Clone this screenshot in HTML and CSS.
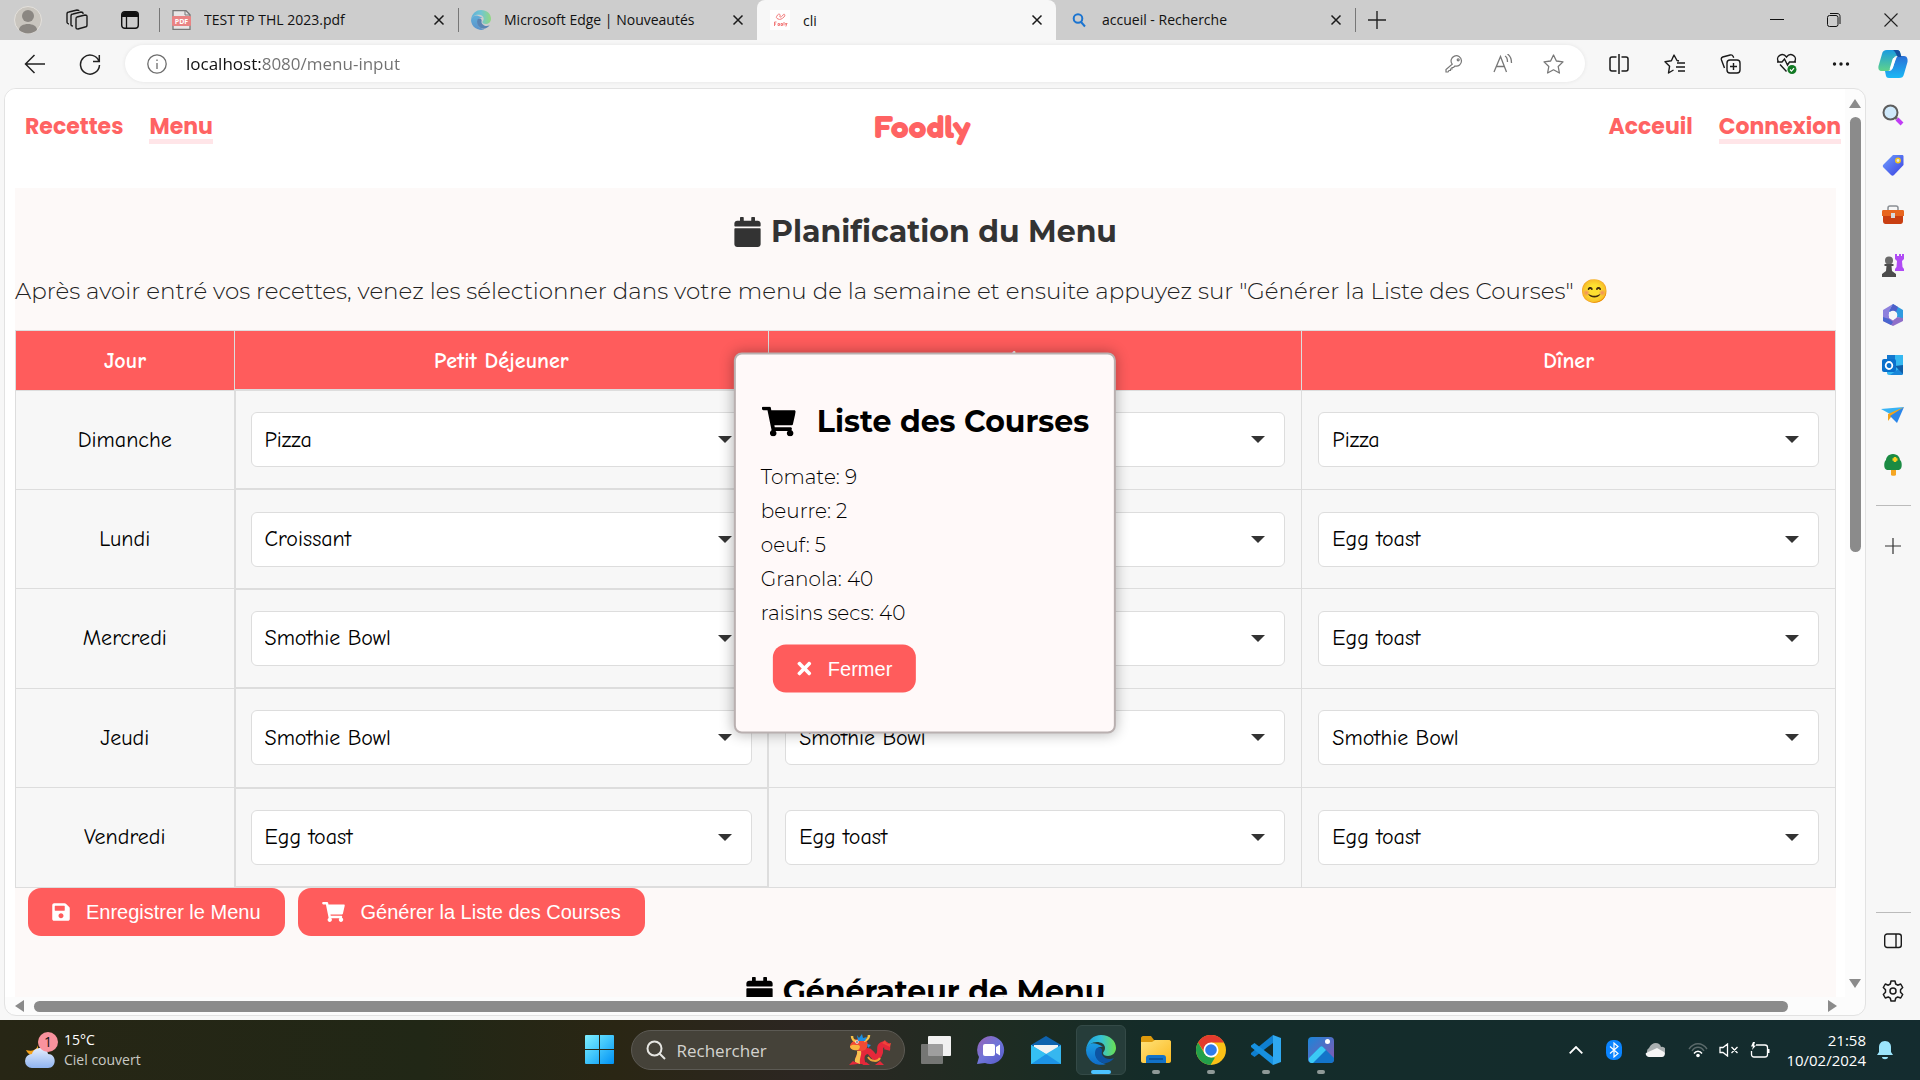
FILE: index.html
```html
<!DOCTYPE html>
<html lang="fr">
<head>
<meta charset="utf-8">
<title>cli</title>
<link rel="stylesheet" href="styles.css">
</head>
<body>
<svg class="defs" aria-hidden="true">
  <defs>
    <linearGradient id="gWin" x1="0" y1="0" x2="1" y2="1"><stop offset="0" stop-color="#7ff0ff"/><stop offset=".5" stop-color="#3fc4fb"/><stop offset="1" stop-color="#0091f5"/></linearGradient>
    <linearGradient id="gEdgeTop" x1="0" y1="0" x2="1" y2="0"><stop offset="0" stop-color="#1a9fe0"/><stop offset=".5" stop-color="#35c1d6"/><stop offset="1" stop-color="#6be04f"/></linearGradient>
    <linearGradient id="gEdgeLow" x1="0" y1="0" x2="0" y2="1"><stop offset="0" stop-color="#1b9de2"/><stop offset="1" stop-color="#0f6cc9"/></linearGradient>
    <linearGradient id="gCop1" x1="0" y1="0" x2="0" y2="1"><stop offset="0" stop-color="#1a9be0"/><stop offset="1" stop-color="#5fd38a"/></linearGradient>
    <linearGradient id="gCop2" x1="0" y1="0" x2="0" y2="1"><stop offset="0" stop-color="#2a6fd6"/><stop offset="1" stop-color="#1ab8f5"/></linearGradient>
    <linearGradient id="gTag" x1="0" y1="0" x2="1" y2="1"><stop offset="0" stop-color="#6fa0ff"/><stop offset="1" stop-color="#3a3fe0"/></linearGradient>
    <linearGradient id="gChat" x1="0" y1="0" x2="1" y2="1"><stop offset="0" stop-color="#9a62b5"/><stop offset=".5" stop-color="#6f75d8"/><stop offset="1" stop-color="#5558c8"/></linearGradient>
    <linearGradient id="gFold" x1="0" y1="0" x2="1" y2="1"><stop offset="0" stop-color="#ffe27a"/><stop offset="1" stop-color="#fbb91f"/></linearGradient>
    <linearGradient id="gPhoto" x1="0" y1="0" x2="1" y2="1"><stop offset="0" stop-color="#1a86d9"/><stop offset="1" stop-color="#8a55b0"/></linearGradient>
    <linearGradient id="gCloud" x1="0" y1="0" x2="0" y2="1"><stop offset="0" stop-color="#e4edfd"/><stop offset="1" stop-color="#8fb4f0"/></linearGradient>
    <symbol id="edge" viewBox="0 0 30 30">
      <path fill="url(#gEdgeLow)" d="M0 15C1 9 6 7 11 9c3 1 5 2 6 3-6-1-8 4-7 9 1 4 5 7 10 8A15 15 0 0 1 0 15Z"/>
      <path fill="url(#gEdgeTop)" d="M0 15C1 5 8 0 15 0c9 0 15 6 15 13 0 5-4 8-8 8-3 0-5-1-5-3 0-1 2-2 2-5 0-4-4-6-8-6C6 7 1 10 0 15Z"/>
      <path fill="#0d54a3" d="M10 14c-2 4-1 9 3 12 5 4 11 2 15-3-4 2-9 1-11-2-2-2-1-4-1-6-1-3-4-3-6-1Z"/>
    </symbol>
    <symbol id="x" viewBox="0 0 12 12"><path d="M1.500 1.500l9 9M10.500 1.500l-9 9" fill="none" stroke="#1a1a1a" stroke-width="1.500"/></symbol>
    <symbol id="calendar" viewBox="0 0 448 512"><path fill="currentColor" d="M12 192h424c6.600 0 12 5.400 12 12v260c0 26.500-21.500 48-48 48H48c-26.500 0-48-21.500-48-48V204c0-6.600 5.400-12 12-12zm436-44v-36c0-26.500-21.500-48-48-48h-48V12c0-6.600-5.400-12-12-12h-40c-6.600 0-12 5.400-12 12v52H160V12c0-6.600-5.400-12-12-12h-40c-6.600 0-12 5.400-12 12v52H48C21.500 64 0 85.500 0 112v36c0 6.600 5.400 12 12 12h424c6.600 0 12-5.400 12-12z"/></symbol>
    <symbol id="cart" viewBox="0 0 576 512"><path fill="currentColor" d="M528.120 301.319l47.273-208C578.806 78.301 567.391 64 551.990 64H159.208l-9.166-44.810C147.758 8.021 137.930 0 126.529 0H24C10.745 0 0 10.745 0 24v16c0 13.255 10.745 24 24 24h69.883l70.248 343.435C147.325 417.100 136 435.222 136 456c0 30.928 25.072 56 56 56s56-25.072 56-56c0-15.674-6.447-29.835-16.824-40h209.647C430.447 426.165 424 440.326 424 456c0 30.928 25.072 56 56 56s56-25.072 56-56c0-22.172-12.888-41.332-31.579-50.405l5.517-24.276c3.413-15.018-8.002-29.319-23.403-29.319H218.117l-6.545-32h293.145c11.206 0 20.920-7.754 23.403-18.681z"/></symbol>
    <symbol id="save" viewBox="0 0 448 512"><path fill="currentColor" d="M433.941 129.941l-83.882-83.882A48 48 0 0 0 316.118 32H48C21.490 32 0 53.490 0 80v352c0 26.510 21.490 48 48 48h352c26.510 0 48-21.490 48-48V163.882a48 48 0 0 0-14.059-33.941zM224 416c-35.346 0-64-28.654-64-64 0-35.346 28.654-64 64-64s64 28.654 64 64c0 35.346-28.654 64-64 64zm96-304.520V212c0 6.627-5.373 12-12 12H76c-6.627 0-12-5.373-12-12V108c0-6.627 5.373-12 12-12h228.520c3.183 0 6.235 1.264 8.485 3.515l3.480 3.480A11.996 11.996 0 0 1 320 111.480z"/></symbol>
    <symbol id="times" viewBox="0 0 352 512"><path fill="currentColor" d="M242.720 256l100.070-100.070c12.280-12.280 12.280-32.190 0-44.480l-22.240-22.240c-12.280-12.280-32.190-12.280-44.480 0L176 189.280 75.930 89.210c-12.280-12.280-32.190-12.280-44.480 0L9.210 111.450c-12.280 12.280-12.280 32.190 0 44.480L109.280 256 9.210 356.070c-12.280 12.280-12.280 32.190 0 44.480l22.240 22.240c12.280 12.280 32.200 12.280 44.480 0L176 322.720l100.070 100.070c12.280 12.280 32.200 12.280 44.480 0l22.240-22.240c12.280-12.280 12.280-32.190 0-44.480L242.720 256z"/></symbol>
  </defs>
</svg>

<header class="tabbar">
  <div class="tab-tools">
    <button aria-label="Profil"><svg width="28" height="28" viewBox="0 0 28 28"><circle cx="14" cy="14" r="13.500" fill="#c9c5be" stroke="#e4e1dc"/><circle cx="14" cy="10" r="6" fill="#8b8782"/><path d="M5 24c0-8 18-8 18 0-5 4.500-13 4.500-18 0Z" fill="#8b8782"/></svg></button>
    <button aria-label="Espaces de travail"><svg width="22" height="22" viewBox="0 0 22 22" fill="none" stroke="#1a1a1a" stroke-width="1.400"><path d="M11 8l8-2c1 0 2 0 2 1v9c0 1-1 2-2 2l-7 2c-1 0-2 0-2-1v-9c0-1 0-2 1-2ZM7 17c-1 0-2 0-2-1V7c0-1 1-2 2-2l8-2c1 0 2 0 2 1v1M3 15c-1 0-2-1-2-2V5c0-1 1-2 2-2l8-2c1 0 2 0 2 1"/></svg></button>
    <button aria-label="Onglets"><svg width="18" height="18" viewBox="0 0 18 18"><rect x=".7" y=".7" width="16.600" height="16.600" rx="3" fill="none" stroke="#111" stroke-width="1.400"/><path d="M1 4c0-2 1-3 3-3h10c2 0 3 1 3 3v2H1Z" fill="#111"/><path d="M5.500 6v11" stroke="#111" stroke-width="1.300"/></svg></button>
  </div>
  <nav class="tabs" aria-label="Onglets ouverts">
    <div class="tab">
      <svg width="19" height="20" viewBox="0 0 19 20"><path d="M1 .7h13l4 4v14.600H1Z" fill="#e8e6e6" stroke="#777" stroke-width="1.300"/><path d="M13 1v4h5" fill="none" stroke="#777"/><rect y="6" width="19" height="10" rx="1" fill="#e98383"/><text x="9.500" y="14" text-anchor="middle" class="pdf">PDF</text></svg>
      <span class="tab-title">TEST TP THL 2023.pdf</span><button aria-label="Fermer l'onglet"><svg width="12" height="12"><use href="#x"/></svg></button>
    </div>
    <div class="tab">
      <svg class="faded" width="20" height="20"><use href="#edge"/></svg>
      <span class="tab-title">Microsoft Edge | Nouveautés</span><button aria-label="Fermer l'onglet"><svg width="12" height="12"><use href="#x"/></svg></button>
    </div>
    <div class="tab active">
      <svg width="20" height="20" viewBox="0 0 20 20"><path d="M0 0h20v20H0Z" fill="#fff"/><path d="M7 6c1-3 4-2 3 0s2 1 3-1 3 0 1 2-4 3-6 2-2-2-1-3M4.500 16v-4h2M4.500 14h1.500M8 13.500h1.500v2H8ZM11 13.500h1.500v2H11ZM14 12v3.500M15.500 13l.7 2 .7-2-1 3.500" fill="none" stroke="#f27c7c"/></svg>
      <span class="tab-title">cli</span><button aria-label="Fermer l'onglet"><svg width="12" height="12"><use href="#x"/></svg></button>
    </div>
    <div class="tab">
      <svg width="20" height="20" viewBox="0 0 20 20" fill="none" stroke="#1b74d0" stroke-width="2"><circle cx="9" cy="8.500" r="4.300"/><path d="M12 12l4 4.500"/></svg>
      <span class="tab-title">accueil - Recherche</span><button aria-label="Fermer l'onglet"><svg width="12" height="12"><use href="#x"/></svg></button>
    </div>
  </nav>
  <button class="new-tab" aria-label="Nouvel onglet"><svg width="18" height="18" viewBox="0 0 18 18"><path d="M9 0v18M0 9h18" stroke="#222" stroke-width="1.400"/></svg></button>
  <div class="win-controls">
    <button aria-label="Réduire"><svg width="14" height="14" viewBox="0 0 14 14"><path d="M0 6.500h14" stroke="#111"/></svg></button>
    <button aria-label="Restaurer"><svg width="14" height="14" viewBox="0 0 14 14" fill="none" stroke="#111"><rect x=".5" y="2.500" width="10.500" height="11" rx="2"/><path d="M3 .5h7c2 0 3 1 3 3v7.500"/></svg></button>
    <button aria-label="Fermer"><svg width="14" height="14" viewBox="0 0 14 14"><path d="M.5.5l13 13M13.500.5l-13 13" stroke="#222" stroke-width="1.100"/></svg></button>
  </div>
</header>

<div class="toolbar">
  <div class="nav-tools">
    <button aria-label="Retour"><svg width="22" height="20" viewBox="0 0 22 20" fill="none" stroke="#222" stroke-width="1.500"><path d="M21 10H2M10.500 1L1.500 10l9 9"/></svg></button>
    <button aria-label="Actualiser"><svg width="22" height="22" viewBox="0 0 22 22" fill="none" stroke="#222" stroke-width="1.500"><path d="M20 8.500A9.500 9.500 0 1 0 20.500 12M20.300 2v6.500H14"/></svg></button>
  </div>
  <div class="address">
    <svg width="20" height="20" viewBox="0 0 20 20" fill="none" stroke="#6d6d6d" stroke-width="1.300"><circle cx="10" cy="10" r="9.200"/><path d="M10 9v6M10 5.500v1.600"/></svg>
    <input class="url" type="text" aria-label="Adresse" value="localhost:8080/menu-input">
    <button aria-label="Mots de passe"><svg width="18" height="18" viewBox="0 0 18 18" fill="none" stroke="#777" stroke-width="1.200"><path d="M7.200 9.200A5.200 5.200 0 1 1 10 11l-1.500 1.500H7V14H5.500v1.500H4L3 17H1v-2.500Z"/><circle cx="13.200" cy="4.800" r="1"/></svg></button>
    <button aria-label="Lecture à voix haute"><svg width="20" height="20" viewBox="0 0 20 20" fill="none" stroke="#777" stroke-width="1.300"><path d="M1 18L7.500 2.500 13.500 18M3.500 12.500h8M12 2c2 1 2.500 3 2.500 6M14.500 0c3 2 4 5 4 9"/></svg></button>
    <button aria-label="Ajouter aux favoris"><svg width="21" height="20" viewBox="0 0 21 20" fill="none" stroke="#777" stroke-width="1.300"><path stroke-linejoin="round" d="M10.500 1l2.900 6 6.600.9-4.800 4.600 1.200 6.500-5.900-3.200L4.600 19l1.200-6.500L1 7.900 7.600 7Z"/></svg></button>
  </div>
  <div class="ext-tools">
    <button aria-label="Fractionner l'écran"><svg width="20" height="20" viewBox="0 0 20 20" fill="none" stroke="#1a1a1a" stroke-width="1.500"><path d="M7.500 3H3C1.500 3 1 3.700 1 5v10c0 1.300.5 2 2 2h4.500M10 0v20M12.500 3H17c1.500 0 2 .7 2 2v10c0 1.300-.5 2-2 2h-4.500"/></svg></button>
    <button aria-label="Favoris"><svg width="21" height="20" viewBox="0 0 21 20" fill="none" stroke="#1a1a1a" stroke-width="1.400"><path stroke-linejoin="round" d="M15 7l-2-.5L10 1 7.400 6.800 1 7.700l4.600 4.500L4.500 19l5-3M13 9h8M12 13h9M14 17h7"/></svg></button>
    <button aria-label="Collections"><svg width="21" height="20" viewBox="0 0 21 20" fill="none" stroke="#1a1a1a" stroke-width="1.400"><rect x="7" y="6" width="13" height="13" rx="3"/><path d="M13.500 9v7M10 12.500h7M4.500 14L1.500 6c-.5-1.500 0-2.500 1.200-3l7.500-2c1.500-.4 2.300 0 3 1.500l.5 1.300"/></svg></button>
    <button aria-label="Performances"><svg width="21" height="21" viewBox="0 0 21 21" fill="none" stroke="#1a1a1a" stroke-width="1.400"><path d="M2.300 8.500c-3-5 4.200-10 8.200-4.500 4-5.500 11.200-.5 8.200 4.500M1 9h5l2.500-3 3 6 2-3H20M4 11.500l6.500 7"/><circle cx="16" cy="16.500" r="4.500" fill="#137a25" stroke="none"/><path d="M14 16.500l1.500 1.700 2.500-3" stroke="#fff" stroke-width="1.200"/></svg></button>
    <button aria-label="Plus"><svg width="18" height="6" viewBox="0 0 18 6" fill="#1a1a1a"><circle cx="2.500" cy="3" r="1.700"/><circle cx="9" cy="3" r="1.700"/><circle cx="15.500" cy="3" r="1.700"/></svg></button>
  </div>
  <button class="copilot" aria-label="Copilot"><svg width="30" height="28" viewBox="0 0 30 28"><path fill="url(#gCop1)" d="M9 0h10c2 0 2.500 1 3 2l1 4h-4c-2 0-3 1-3.600 3L12 19c-.6 2-1.500 2-3 2H4c-3 0-4-2-3.500-5L4 4c.8-3 2-4 5-4Z"/><path fill="url(#gCop2)" d="M21 28H11c-2 0-2.500-1-3-2l-1-5h4c2 0 3-1 3.600-3L18 9c.6-2 1.500-3 3-3h5c3 0 4 3 3.500 6L26 24c-.8 3-2 4-5 4Z"/><path fill="#16509e" d="M15 0h4c2 0 2.500 1 3 2l1.500 5H20c-2-2-2-5-5-7Z"/><path fill="#fff" d="M14.300 10c.4-1.700 1-2 2-2h1.400l-2.400 8.500c-.5 2-1 2.500-2 2.500h-1.600Z"/></svg></button>
</div>

<div class="workspace">
  <div class="frame">
    <main class="page">
      <header class="site-nav">
        <div class="links"><a href="#recettes">Recettes</a><a class="on" href="#menu">Menu</a></div>
        <a class="brand" href="#accueil">Foodly</a>
        <div class="links end"><a href="#acceuil">Acceuil</a><a class="on" href="#connexion">Connexion</a></div>
      </header>
      <section class="planner">
        <h1><svg class="ic-cal"><use href="#calendar"/></svg>Planification du Menu</h1>
        <p class="intro">Après avoir entré vos recettes, venez les sélectionner dans votre menu de la semaine et ensuite appuyez sur "Générer la Liste des Courses" 😊</p>
        <table>
          <thead><tr><th class="day">Jour</th><th>Petit Déjeuner</th><th>Déjeuner</th><th>Dîner</th></tr></thead>
          <tbody>
            <tr><td>Dimanche</td>
              <td><span class="pick"><select aria-label="Dimanche, petit déjeuner"><option>Pizza</option></select></span></td>
              <td><span class="pick"><select aria-label="Dimanche, déjeuner"><option>Pizza</option></select></span></td>
              <td><span class="pick"><select aria-label="Dimanche, dîner"><option>Pizza</option></select></span></td></tr>
            <tr><td>Lundi</td>
              <td><span class="pick"><select aria-label="Lundi, petit déjeuner"><option>Croissant</option></select></span></td>
              <td><span class="pick"><select aria-label="Lundi, déjeuner"><option>Pizza</option></select></span></td>
              <td><span class="pick"><select aria-label="Lundi, dîner"><option>Egg toast</option></select></span></td></tr>
            <tr><td>Mercredi</td>
              <td><span class="pick"><select aria-label="Mercredi, petit déjeuner"><option>Smothie Bowl</option></select></span></td>
              <td><span class="pick"><select aria-label="Mercredi, déjeuner"><option>Pizza</option></select></span></td>
              <td><span class="pick"><select aria-label="Mercredi, dîner"><option>Egg toast</option></select></span></td></tr>
            <tr><td>Jeudi</td>
              <td><span class="pick"><select aria-label="Jeudi, petit déjeuner"><option>Smothie Bowl</option></select></span></td>
              <td><span class="pick"><select aria-label="Jeudi, déjeuner"><option>Smothie Bowl</option></select></span></td>
              <td><span class="pick"><select aria-label="Jeudi, dîner"><option>Smothie Bowl</option></select></span></td></tr>
            <tr><td>Vendredi</td>
              <td><span class="pick"><select aria-label="Vendredi, petit déjeuner"><option>Egg toast</option></select></span></td>
              <td><span class="pick"><select aria-label="Vendredi, déjeuner"><option>Egg toast</option></select></span></td>
              <td><span class="pick"><select aria-label="Vendredi, dîner"><option>Egg toast</option></select></span></td></tr>
          </tbody>
        </table>
        <div class="actions">
          <button class="cta"><svg class="ic-save"><use href="#save"/></svg>Enregistrer le Menu</button>
          <button class="cta"><svg class="ic-cart"><use href="#cart"/></svg>Générer la Liste des Courses</button>
        </div>
        <h2><svg class="ic-cal"><use href="#calendar"/></svg>Générateur de Menu</h2>
      </section>
      <div class="modal" role="dialog" aria-labelledby="list-title">
        <h2 id="list-title"><svg class="ic-cart-big"><use href="#cart"/></svg>Liste des Courses</h2>
        <ul><li>Tomate: 9</li><li>beurre: 2</li><li>oeuf: 5</li><li>Granola: 40</li><li>raisins secs: 40</li></ul>
        <button class="cta"><svg class="ic-times"><use href="#times"/></svg>Fermer</button>
      </div>
    </main>
    <div class="vbar"><i class="arrow up"></i><div class="vtrack"><div class="vthumb"></div></div><i class="arrow down"></i></div>
    <div class="hbar"><i class="arrow left"></i><div class="hthumb"></div><i class="arrow right"></i></div>
  </div>
  <aside class="sidebar">
    <button aria-label="Rechercher"><svg width="22" height="22" viewBox="0 0 22 22"><path d="M13 13l2 2" stroke="#777" stroke-width="3"/><path d="M15 15l5 5" stroke="#c03cf5" stroke-width="4"/><circle cx="8.500" cy="8.500" r="7" fill="#cfe9fb" stroke="#5d5d5d" stroke-width="2"/></svg></button>
    <button aria-label="Achats"><svg width="22" height="22" viewBox="0 0 22 22"><path d="M11 1h9c1 0 1.500.5 1.500 1.500V11L12 21c-1 1-2 1-3 0l-7.500-7.500c-1-1-1-2 0-3Z" fill="url(#gTag)"/><circle cx="16" cy="6.500" r="2.200" fill="#dfe6f2" stroke="#f5c518" stroke-width="1.500"/></svg></button>
    <button aria-label="Outils"><svg width="24" height="20" viewBox="0 0 24 20"><path d="M7 5V3c0-1.500 1-2 2-2h6c1 0 2 .5 2 2v2" fill="none" stroke="#8b8f94" stroke-width="1.500"/><path d="M2 10h20v6c0 2-1 3-2.500 3h-15C3 19 2 18 2 16Z" fill="#c93f12"/><path d="M1 6.500C1 5.500 1.500 5 2.500 5h19c1 0 1.500.5 1.500 1.500V11H1Z" fill="#e8661f"/><path d="M10 8h4v5h-4Z" fill="#d6dadd"/></svg></button>
    <button aria-label="Jeux"><svg width="24" height="24" viewBox="0 0 24 24"><path d="M14 1h2v2h2V1h2v2h1V1h2v5l-2 2 .5 6 1.500 2v2h-9v-2l1.500-2 .5-6-2-2Z" fill="#b04bf5"/><circle cx="8" cy="7.500" r="4" fill="#6a6a6a"/><path d="M3.500 11h9v2h-2l.5 5 4 3v3H1v-3l4-3 .5-5h-2Z" fill="#4c4c4c"/></svg></button>
    <button aria-label="Microsoft 365"><svg width="22" height="24" viewBox="0 0 22 24"><path d="M11 1L7 8.500V16l-6 2V7Z" fill="#8d80dd"/><path d="M11 1l10 6v9l-6-2V10L7 8.500Z" fill="#2f9be0"/><path d="M11 1l5 3-2 5-7-.5Z" fill="#4f5fc9"/><path d="M21 15v3l-10 5-10-5v-2l6-1 4 2.500 4-3.500Z" fill="#8f6fc9"/><path d="M1 14l6 2 4 3-2 3-8-4Z" fill="#4a66cf"/><circle cx="11" cy="12" r="4.300" fill="#f7f7f7"/></svg></button>
    <button aria-label="Outlook"><svg width="22" height="22" viewBox="0 0 22 22"><path d="M5 1h16v18c0 1-.5 2-1.500 2H7c-1 0-2-1-2-2Z" fill="#35b8f1"/><path d="M5 1h8v8H5Z" fill="#1378cf"/><path d="M21 10v9c0 1-.5 2-1.500 2H8l13-9Z" fill="#1a86d9"/><path d="M13 12l8 8V11Z" fill="#0f5ea8"/><rect y="5" width="14" height="13" rx="2" fill="#0a70cc"/><ellipse cx="7" cy="11.500" rx="3.300" ry="3.500" fill="none" stroke="#fff" stroke-width="1.800"/></svg></button>
    <button aria-label="Déposer"><svg width="24" height="18" viewBox="0 0 24 18"><path d="M0 3L23 1 11 9Z" fill="#37b3f5"/><path d="M23 1L7 8v7l3-4Z" fill="#f2a31b"/><path d="M23 1L9 10l7 7Z" fill="#2a86ea"/></svg></button>
    <button aria-label="Arbre"><svg width="20" height="24" viewBox="0 0 20 24"><path d="M8 15h5v7c0 1-5 1-5 0Z" fill="#f5a623"/><path d="M10 1c5 0 7 4 7 6 2 1 3 9-1 10H4C0 16 1 8 3 7c0-2 2-6 7-6Z" fill="#1b8b43"/><path d="M12 4v5M9.500 6.500h5" stroke="#ffd21f" stroke-width="2.500"/></svg></button>
    <hr>
    <button aria-label="Personnaliser"><svg width="16" height="16" viewBox="0 0 16 16"><path d="M8 0v16M0 8h16" stroke="#333" stroke-width="1.200"/></svg></button>
    <hr class="push">
    <button aria-label="Masquer la barre latérale"><svg width="18" height="16" viewBox="0 0 18 16" fill="none" stroke="#1a1a1a" stroke-width="1.400"><rect x=".7" y="1" width="16.600" height="13.500" rx="2.500"/><path d="M12 1v13.500"/></svg></button>
    <button aria-label="Paramètres"><svg width="22" height="22" viewBox="0 0 22 22" fill="none" stroke="#1a1a1a" stroke-width="1.500" stroke-linejoin="round"><path d="M9 1h4l.7 3 2 1.200L18.700 4l2 3.500-2.200 2.200v2.600l2.200 2.200-2 3.500-3-1-2 1.200L13 21H9l-.7-2.800-2-1.200-3 1-2-3.500 2.200-2.200V9.700L1.300 7.500l2-3.500 3 1.200 2-1.200Z"/><circle cx="11" cy="11" r="3"/></svg></button>
  </aside>
</div>

<footer class="taskbar">
  <div class="weather">
    <svg width="34" height="38" viewBox="0 0 34 38"><path d="M14 8c2 8-3 14-12 11 2 5 8 7 12 5Z" fill="#f5a31c"/><path d="M8 37a7 7 0 0 1 0-14c2-8 15-8 16 0 9 0 9 14 0 14Z" fill="url(#gCloud)"/><circle cx="24" cy="11" r="10" fill="#f9929d"/><text x="24" y="16" text-anchor="middle" class="badge">1</text></svg>
    <div><div>15°C</div><div class="dim">Ciel couvert</div></div>
  </div>
  <div class="apps">
    <button aria-label="Démarrer"><svg width="30" height="30" viewBox="0 0 30 30" fill="url(#gWin)"><path d="M1 0h13v14H0V1q0-1 1-1ZM15 0h13q1 0 1 1v13H15ZM0 15h14v14H1q-1 0-1-1ZM15 15h14v13q0 1-1 1H15Z"/></svg></button>
    <label class="search">
      <svg width="20" height="20" viewBox="0 0 20 20" fill="none" stroke="#e6e6e2" stroke-width="2"><circle cx="8.500" cy="8.500" r="7"/><path d="M13.500 13.500L19 19"/></svg>
      <input type="text" placeholder="Rechercher" aria-label="Rechercher">
      <svg width="44" height="32" viewBox="0 0 44 32"><path d="M12 25c3-8 8-10 11-6s5 7 8 2-1-8 3-10 6 1 5 5" fill="none" stroke="#e5283a" stroke-width="6"/><path d="M20 23c3 5 10 5 12 1" fill="none" stroke="#f0a53a" stroke-width="2"/><path d="M8 30c-3-5 2-9 1-13l7-1c2 4-1 8 2 14Z" fill="#e5283a"/><path d="M7 28c-1-4 3-6 2-11h4c1 4-2 7-1 13Z" fill="#f7c250"/><path d="M2 12c1-4 6-8 13-7 5 1 6 6 3 10-3 3-7 2-10 1-3 0-6-1-6-4Z" fill="#f04a34"/><path d="M2 12c3-2 5-1 8-1s2 4 0 5-8 0-8-4Z" fill="#f9b53f"/><path d="M4 2c0 3 2 5 4 5M21 1c0 4-2 5-5 6" fill="none" stroke="#f9c246" stroke-width="2.500"/><path d="M9 1l2 3 3-4 1 4 4-1-2 4H10ZM19 10l4 1-3 3Z" fill="#1d8fe0"/><circle cx="9" cy="8" r="1.700" fill="#fff"/><circle cx="9" cy="8" r=".8" fill="#222"/><path d="M1 31l4-4 5 3ZM27 31l5-4 4 4ZM14 31l4-3 4 3Z" fill="#e5283a"/><path d="M34 9l3-3 2 4 4-1-1 4Z" fill="#f0443a"/></svg>
    </label>
    <button aria-label="Vue des tâches"><svg width="30" height="28" viewBox="0 0 30 28"><rect x="7" width="23" height="20" rx="1" fill="#f1f1f1"/><rect y="8" width="22" height="20" rx="1" fill="#8a8a8a" opacity=".8"/></svg></button>
    <button aria-label="Conversation"><svg width="30" height="30" viewBox="0 0 30 30"><path d="M15 1a14 14 0 1 1-6 27l-8 1 2-7A14 14 0 0 1 15 1Z" fill="url(#gChat)"/><rect x="7" y="9" width="12" height="12" rx="2" fill="#fff"/><path d="M20 12l4-2.500v11L20 18Z" fill="#fff"/></svg></button>
    <button aria-label="Courrier"><svg width="30" height="28" viewBox="0 0 30 28"><path d="M0 9L15 0l15 9v19H0Z" fill="#0e62ad"/><path d="M3 9h24v12H3Z" fill="#f1f2f3"/><path d="M0 9l15 9L30 9v19H0Z" fill="#36b7ef"/><path d="M0 28L15 18l15 10Z" fill="#1d94e6"/><path d="M0 9l15 9L0 28Z" fill="#35c0f3"/></svg></button>
    <button class="current" aria-label="Edge"><svg width="30" height="30"><use href="#edge"/></svg></button>
    <button class="open" aria-label="Explorateur"><svg width="30" height="28" viewBox="0 0 30 28"><path d="M0 2C0 1 1 0 2 0h8l3 4h15c1 0 2 1 2 2v6H0Z" fill="#dd9a0c"/><path d="M0 6h11l3-2h14c1 0 2 1 2 2v19c0 1-1 2-2 2H2c-1 0-2-1-2-2Z" fill="url(#gFold)"/><path d="M5 27v-5c0-2 1-3 3-3h14c2 0 3 1 3 3v5Z" fill="#1272c8"/><path d="M8 23h14" stroke="#0a4c91" stroke-width="1.500"/></svg></button>
    <button class="open" aria-label="Chrome"><svg width="30" height="30" viewBox="0 0 30 30"><circle cx="15" cy="15" r="15" fill="#fbc116"/><path d="M2 7.500A15 15 0 0 1 28 7.500H15L9 18Z" fill="#e33b2e"/><path d="M2 7.500L8.500 18.500 15 22.500h4L14.500 30A15 15 0 0 1 2 7.500Z" fill="#23a04a"/><circle cx="15" cy="15" r="7.500" fill="#fff"/><circle cx="15" cy="15" r="5.800" fill="#2f7bea"/></svg></button>
    <button class="open" aria-label="Visual Studio Code"><svg width="30" height="30" viewBox="0 0 30 30"><path d="M22 0l8 3v24l-8 3Z" fill="#2fa8f0"/><path d="M22 0v8L3.500 22 0 19.500v-1.500Z" fill="#0f7fd0"/><path d="M22 30v-8L3.500 8 0 10.500V12Z" fill="#1791e0"/></svg></button>
    <button class="open" aria-label="Photos"><svg width="26" height="26" viewBox="0 0 26 26"><rect width="26" height="26" rx="4" fill="url(#gPhoto)"/><path d="M1 21L12 10c1-1 2-1 3 0l11 11v1c0 3-1 4-4 4H4c-2 0-4-2-3-5Z" fill="#1374c9"/><path d="M1 21L12 10c1-1 2-1 3 0l3 3L5 26H4c-2 0-4-2-3-5Z" fill="#3bc9f5"/><circle cx="19.500" cy="4.500" r="2.500" fill="#fff"/></svg></button>
  </div>
  <div class="tray">
    <button aria-label="Icônes masquées"><svg width="14" height="8" viewBox="0 0 14 8"><path d="M.7 7.300L7 1l6.300 6.300" fill="none" stroke="#fff" stroke-width="1.800"/></svg></button>
    <button aria-label="Bluetooth"><svg width="16" height="20" viewBox="0 0 16 20"><rect width="16" height="20" rx="7" fill="#0a84ff"/><path d="M4 6.500l8 7L8 17V3l4 3.500-8 7" fill="none" stroke="#fff" stroke-width="1.200"/></svg></button>
    <button aria-label="OneDrive"><svg width="20" height="14" viewBox="0 0 20 14"><path d="M4 12a4 4 0 0 1 0-7c3-7 11-6 12-1a4 4 0 0 1 2 8Z" fill="#a9afb0"/><path d="M1 10L12 5l7 4c2 2 0 5-2 5H4c-2 0-4-2-3-4Z" fill="#f5f5f5"/></svg></button>
    <button aria-label="Wi-Fi"><svg width="20" height="16" viewBox="0 0 20 16" fill="none"><path d="M1 7c5-7 13-7 18 0M4 9c3-5 9-5 12 0" stroke="#5b6a6b" stroke-width="1.400"/><path d="M6 11.500c2-3 6-3 8 0" stroke="#fff" stroke-width="1.400"/><circle cx="10" cy="13.500" r="1.800" fill="#fff"/></svg></button>
    <button aria-label="Volume"><svg width="20" height="14" viewBox="0 0 20 14" fill="none" stroke="#fff" stroke-width="1.300"><path d="M1 4.500h3L8.500 1v12L4 9.500H1ZM12.500 4l6 6M18.500 4l-6 6"/></svg></button>
    <button aria-label="Batterie"><svg width="20" height="16" viewBox="0 0 20 16" fill="none" stroke="#fff" stroke-width="1.300"><path d="M6 3h9c1.500 0 2.500 1 2.500 2.500v7c0 1.500-1 2.500-2.500 2.500H4c-1.500 0-2.500-1-2.500-2.500V9"/><path d="M18.500 7v4" stroke-width="2"/><path d="M3 0L1 4.500h2L2 8l4-4.500H4L5 0Z" fill="#fff" stroke="none"/></svg></button>
    <div class="clock"><div>21:58</div><div>10/02/2024</div></div>
    <button aria-label="Notifications"><svg width="16" height="20" viewBox="0 0 16 20"><path d="M8 1c4 0 6 3 6 6v5l2 3H0l2-3V7c0-3 2-6 6-6ZM5 17h6c0 3-6 3-6 0Z" fill="#9be4fb"/></svg></button>
  </div>
</footer>
</body>
</html>
```
FILE: styles.css
```css
* { box-sizing: border-box; }

body {
  margin: 0;
  height: 100vh;
  display: flex;
  flex-direction: column;
  overflow: hidden;
  background: #f7f7f7;
  color: #111;
  font-family: "Open Sans", "Noto Sans", sans-serif;
}

button {
  border: 0;
  padding: 0;
  background: none;
  color: inherit;
  font: inherit;
}
svg { display: block; flex: none; }
.defs { position: absolute; width: 0; height: 0; }

/* Window tabs */
.tabbar {
  flex: none;
  display: flex;
  height: 40px;
  padding-bottom: 1px;
  background: #cdcdcd;
  font-size: 14px;
}
.tab-tools {
  flex: none;
  width: 159px;
  padding: 0 20px 0 14px;
  display: flex;
  align-items: center;
  gap: 24px;
}
.tab-tools button:last-child { margin-left: 9px; }
.tabs { display: flex; flex: 0 1 1196px; min-width: 0; }
.tab {
  flex: 1 1 0;
  min-width: 0;
  display: flex;
  align-items: center;
  gap: 13px;
  padding: 0 13px;
  background: linear-gradient(#777, #777) left center / 1px 24px no-repeat;
}
.tab-title { flex: 1; min-width: 0; white-space: nowrap; overflow: hidden; }
.tab.active { margin-bottom: -1px; background: #f7f7f7; border-radius: 8px 8px 0 0; }
.tab.active + .tab { background: none; }
.faded { opacity: .6; }
.pdf { font: bold 7px "Open Sans", sans-serif; fill: #fff; }
.new-tab {
  flex: none;
  padding: 0 13px;
  background: linear-gradient(#777, #777) left center / 1px 24px no-repeat;
}
.win-controls {
  margin-left: auto;
  padding-right: 22px;
  display: flex;
  align-items: center;
  gap: 43px;
}

/* Toolbar */
.toolbar {
  flex: none;
  display: flex;
  align-items: center;
  height: 48px;
  padding-bottom: 1px;
}
.nav-tools { flex: none; width: 125px; padding-left: 24px; display: flex; gap: 33px; align-items: center; }
.address {
  flex: 1;
  min-width: 0;
  height: 37px;
  padding: 0 21px 0 22px;
  display: flex;
  align-items: center;
  gap: 30px;
  background: #fff;
  border-radius: 19px;
  box-shadow: 0 0 4px rgba(0, 0, 0, .08);
}
.url {
  flex: 1;
  min-width: 0;
  margin-left: -11px;
  border: 0;
  padding: 0;
  font: 17px "Open Sans", sans-serif;
  color: transparent;
  background: linear-gradient(90deg, #111 76px, #707070 76px);
  -webkit-background-clip: text;
  background-clip: text;
}
.ext-tools { flex: none; display: flex; align-items: center; gap: 35px; padding: 0 28px 0 24px; }
.copilot { flex: none; margin-right: 12px; }

/* Page frame with its scrollbars and the side strip */
.workspace { flex: 1; min-height: 0; display: flex; padding-bottom: 4px; }
.frame {
  flex: 1;
  min-width: 0;
  margin-left: 4px;
  display: grid;
  grid-template: minmax(0, 1fr) 18px / minmax(0, 1fr) 20px;
  border: 1px solid #e2e2e2;
  border-radius: 12px;
  overflow: hidden;
  background: #fcfcfc;
}
.page { position: relative; overflow: hidden; background: #fff; min-width: 0; }
.vbar { display: flex; flex-direction: column; align-items: center; padding: 10px 0 9px; gap: 9px; }
.vtrack { flex: 1; }
.vthumb { width: 11px; height: 51%; border-radius: 6px; background: #8b8b8b; }
.hbar { display: flex; align-items: center; padding: 0 8px 0 10px; gap: 10px; }
.hthumb { flex: 1; height: 11px; margin-right: 30px; border-radius: 6px; background: #8b8b8b; }
.arrow { border: 6px solid transparent; }
.arrow.up { border-top-width: 0; border-bottom: 9px solid #8b8b8b; }
.arrow.down { border-bottom-width: 0; border-top: 9px solid #8b8b8b; }
.arrow.left { border-left-width: 0; border-right: 9px solid #8b8b8b; }
.arrow.right { border-right-width: 0; border-left: 9px solid #8b8b8b; }

.sidebar { flex: none; width: 54px; padding-top: 2px; display: flex; flex-direction: column; align-items: center; }
.sidebar button { flex: none; height: 50px; display: flex; align-items: center; }
.sidebar hr { flex: none; width: 35px; margin: 15px 0; border: 0; border-top: 1px solid #bbb; }
.sidebar .push { margin: auto 0 3px; }

/* Site */
.site-nav {
  display: grid;
  grid-template-columns: 1fr auto 1fr;
  align-items: center;
  height: 99px;
  padding: 0 4px 20px;
  font: bold 22px/24px Poppins, Inter, sans-serif;
}
.site-nav a { color: #ff6363; text-decoration: none; }
.links { display: flex; gap: 26px; padding-left: 16px; }
.links a { padding-top: 2px; border-bottom: 5px solid transparent; }
.links a.on { border-color: #ffe5e8; }
.end { justify-content: flex-end; }
.brand { padding: 0 5px 4px 0; font: bold 32px "Fredoka One", Fredoka, Inter, sans-serif; }

.planner { margin: 0 9px 0 10px; background: #fdf9f8; }
h1, h2 {
  margin: 0;
  display: flex;
  justify-content: center;
  align-items: center;
  gap: 10px;
  font: bold 30px/40px Montserrat, Inter, sans-serif;
}
h1 { padding: 24px 0 19px; color: #333; }
.planner h2 { padding: 36px 0 20px; color: #000; }
.ic-cal { width: 27px; height: 30px; }
.ic-save { width: 18px; height: 20px; }
.ic-cart { width: 23px; height: 20px; }
.ic-cart-big { width: 34px; height: 30px; }
.ic-times { width: 15px; height: 20px; }
.intro {
  margin: 0;
  padding-bottom: 19px;
  font: 300 23px/40px Montserrat, Inter, sans-serif;
  color: #222;
}

table {
  width: 100%;
  height: 558px;
  table-layout: fixed;
  border-collapse: collapse;
  font: 22px/26px "Comic Neue", "Comic Sans MS", Lato, sans-serif;
  color: #000;
}
th { height: 59px; padding: 17px 16px 15px; background: #ff5c5c; color: #fff; border: 1px solid #ddd; }
.day { width: 219px; }
td { padding: 21px 16px; text-align: center; background: #f7f7f7; border: 1px solid #ddd; }
td:nth-child(2) { padding-left: 15px; padding-right: 15px; border-width: 2px; }
.pick { display: grid; align-items: center; }
.pick::after {
  content: "";
  grid-area: 1 / 1;
  justify-self: end;
  margin-right: 20px;
  border: 7px solid transparent;
  border-top-color: #333;
  border-bottom: 0;
  pointer-events: none;
}
select {
  grid-area: 1 / 1;
  width: 100%;
  height: 55px;
  padding: 0 40px 0 13px;
  appearance: none;
  font: inherit;
  color: #000;
  background: #fff;
  border: 1px solid #ddd;
  border-radius: 6px;
}

.actions { display: flex; gap: 13px; padding-left: 13px; }
.cta {
  display: flex;
  align-items: center;
  gap: 16px;
  height: 48px;
  padding: 0 24px;
  border-radius: 13px;
  background: #ff5c5c;
  color: #fff;
  font: 20px "Liberation Sans", Arial, sans-serif;
}

.modal {
  position: absolute;
  top: 50%;
  left: 50%;
  transform: translate(-50%, -50%);
  padding: 47px 25px 39px;
  border: 2px solid #b9b0b0;
  border-radius: 8px;
  background: #fff9f9;
  box-shadow: 0 0 14px rgba(0, 0, 0, .3);
  color: #000;
}
.modal h2 { justify-content: flex-start; gap: 21px; padding-left: 1px; }
.modal ul {
  margin: 18px 0 15px;
  padding: 0;
  list-style: none;
  font: 300 20px/34px Montserrat, Inter, sans-serif;
}
.modal .cta { margin-left: 12px; }

/* Taskbar */
.taskbar {
  flex: none;
  display: grid;
  grid-template-columns: 1fr auto 1fr;
  align-items: center;
  height: 60px;
  color: #fff;
  font-size: 15px;
  line-height: 20px;
  background: linear-gradient(90deg, #272615 0%, #212716 22%, #2a2614 32%, #2c2622 42%, #1e2c22 52%, #142c29 60%, #142c2f 100%);
}
.weather { display: flex; align-items: center; gap: 6px; padding-left: 24px; font-size: 14px; }
.badge { font: 14px "Open Sans", sans-serif; fill: #111; }
.dim { color: #c9c9c4; }
.apps { display: flex; align-items: center; gap: 5px; }
.apps button {
  position: relative;
  width: 50px;
  height: 50px;
  display: flex;
  align-items: center;
  justify-content: center;
  border-radius: 6px;
}
.apps .current { background: #263d3a; border: 1px solid #344a47; }
.open::after, .current::after {
  content: "";
  position: absolute;
  bottom: 1px;
  width: 8px;
  height: 4px;
  border-radius: 2px;
  background: #8f9a98;
}
.current::after { bottom: 0; width: 20px; background: #4cc2ff; }
.search {
  width: 274px;
  height: 40px;
  padding: 0 12px 0 14px;
  margin: 0 1px;
  display: flex;
  align-items: center;
  gap: 11px;
  border: 1px solid #5c5a54;
  border-radius: 20px;
  background: #454239;
}
.search input {
  flex: 1;
  min-width: 0;
  border: 0;
  padding: 0;
  background: none;
  color: #fff;
  font: 17px "Open Sans", sans-serif;
}
.search input::placeholder { color: #d4d3cf; }
.tray { display: flex; align-items: center; justify-content: flex-end; padding-right: 27px; gap: 11px; }
.tray button { flex: none; }
.tray button:nth-child(-n+3) { margin-right: 12px; }
.clock { margin-left: 5px; text-align: right; }
```
